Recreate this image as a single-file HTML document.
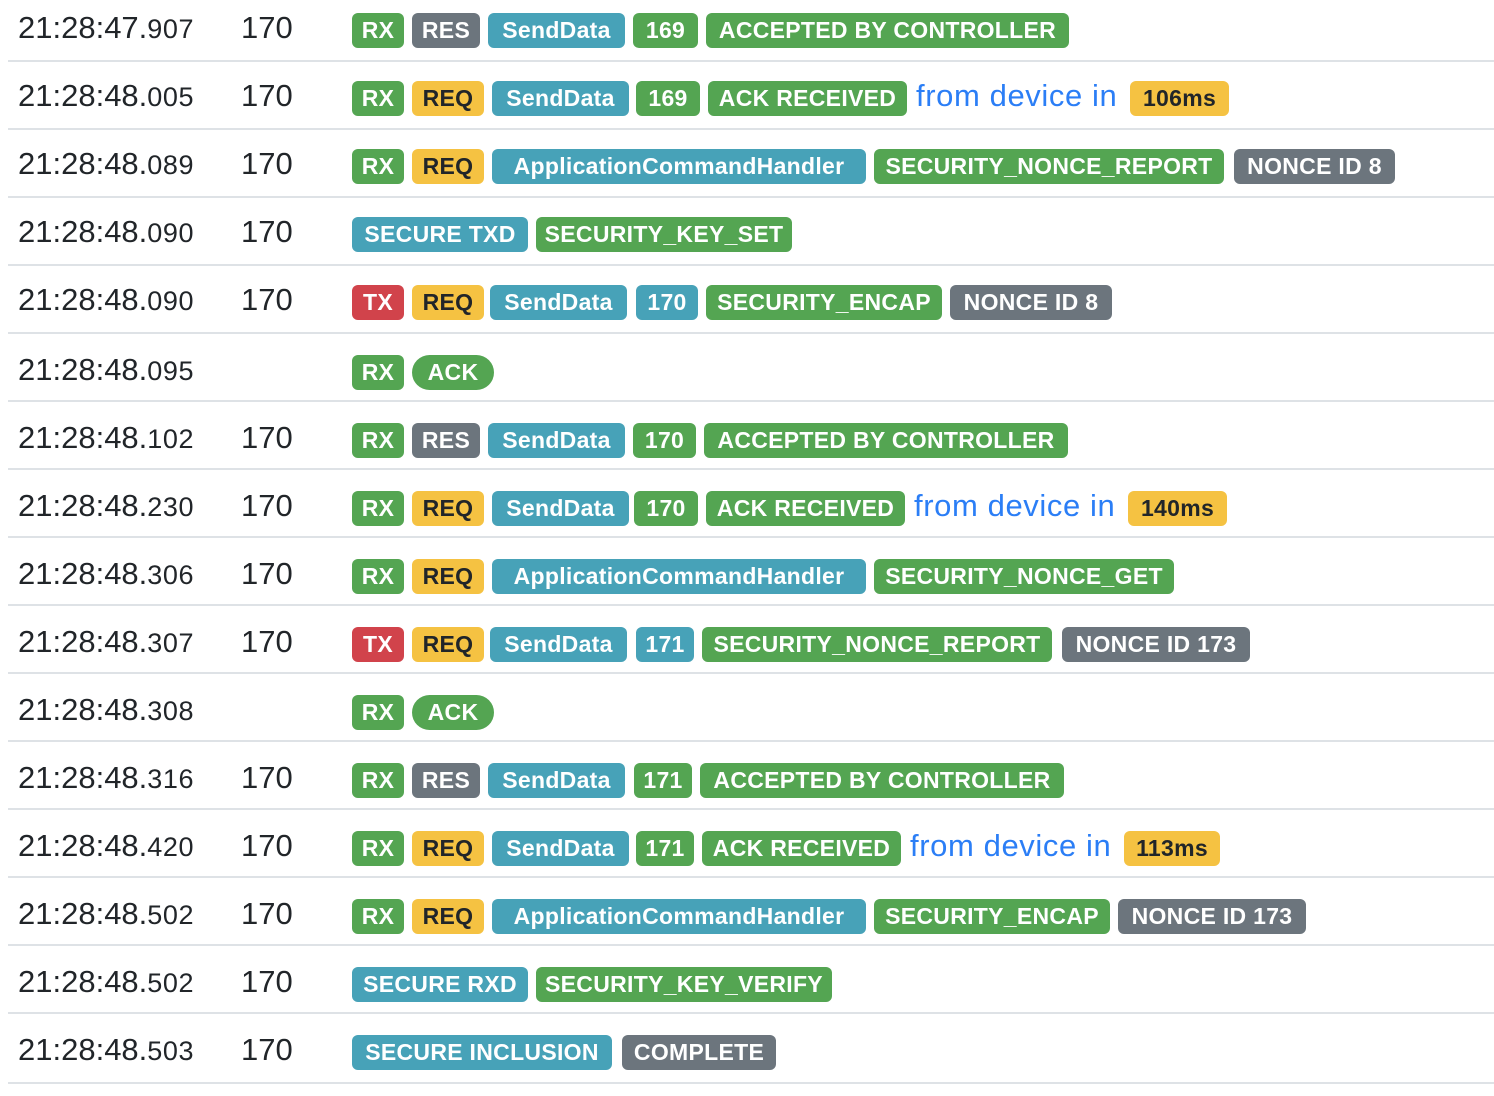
<!DOCTYPE html>
<html><head><meta charset="utf-8"><style>
body{margin:0;width:1494px;height:1096px;background:#fff;position:relative;overflow:hidden;font-family:"Liberation Sans",Arial,sans-serif;color:#212529}
.s{position:absolute;left:8px;right:0;height:2px;background:#dee2e6}
.t{position:absolute;left:18px;height:40px;line-height:40px;font-size:31px;white-space:nowrap}
.t small{font-size:27px;letter-spacing:0.6px}
.n{position:absolute;left:241px;height:40px;line-height:40px;font-size:31px}
.b{position:absolute;height:35px;line-height:35px;font-size:23px;font-weight:bold;color:#fff;text-align:center;border-radius:6px;white-space:nowrap;overflow:hidden;letter-spacing:0.3px}
.g{background:#54a552}.y{background:#f5c242;color:#212529}.c{background:#47a2b8}.k{background:#6c757d}.r{background:#d1434b}
.p{border-radius:18px}
.f{position:absolute;height:40px;line-height:40px;font-size:31px;color:#2b7ef6;white-space:nowrap;letter-spacing:0.6px}
</style></head><body>
<div class="s" style="top:60px"></div><div class="s" style="top:128px"></div><div class="s" style="top:196px"></div><div class="s" style="top:264px"></div><div class="s" style="top:332px"></div><div class="s" style="top:400px"></div><div class="s" style="top:468px"></div><div class="s" style="top:536px"></div><div class="s" style="top:604px"></div><div class="s" style="top:672px"></div><div class="s" style="top:740px"></div><div class="s" style="top:808px"></div><div class="s" style="top:876px"></div><div class="s" style="top:944px"></div><div class="s" style="top:1012px"></div><div class="s" style="top:1082px"></div>

<div class="t" style="top:8px">21:28:47.<small>907</small></div><div class="n" style="top:8px">170</div>
<div class="b g" style="top:13px;left:352px;width:52px">RX</div><div class="b k" style="top:13px;left:412px;width:68px">RES</div><div class="b c" style="top:13px;left:488px;width:137px">SendData</div><div class="b g" style="top:13px;left:633px;width:65px">169</div><div class="b g" style="top:13px;left:706px;width:363px">ACCEPTED BY CONTROLLER</div>

<div class="t" style="top:76px">21:28:48.<small>005</small></div><div class="n" style="top:76px">170</div>
<div class="b g" style="top:81px;left:352px;width:52px">RX</div><div class="b y" style="top:81px;left:412px;width:72px">REQ</div><div class="b c" style="top:81px;left:492px;width:137px">SendData</div><div class="b g" style="top:81px;left:636px;width:64px">169</div><div class="b g" style="top:81px;left:708px;width:199px">ACK RECEIVED</div><div class="f" style="top:76px;left:916px">from device in</div><div class="b y" style="top:81px;left:1130px;width:99px">106ms</div>

<div class="t" style="top:144px">21:28:48.<small>089</small></div><div class="n" style="top:144px">170</div>
<div class="b g" style="top:149px;left:352px;width:52px">RX</div><div class="b y" style="top:149px;left:412px;width:72px">REQ</div><div class="b c" style="top:149px;left:492px;width:374px">ApplicationCommandHandler</div><div class="b g" style="top:149px;left:874px;width:350px">SECURITY_NONCE_REPORT</div><div class="b k" style="top:149px;left:1234px;width:161px">NONCE ID 8</div>

<div class="t" style="top:212px">21:28:48.<small>090</small></div><div class="n" style="top:212px">170</div>
<div class="b c" style="top:217px;left:352px;width:176px">SECURE TXD</div><div class="b g" style="top:217px;left:536px;width:256px">SECURITY_KEY_SET</div>

<div class="t" style="top:280px">21:28:48.<small>090</small></div><div class="n" style="top:280px">170</div>
<div class="b r" style="top:285px;left:352px;width:52px">TX</div><div class="b y" style="top:285px;left:412px;width:72px">REQ</div><div class="b c" style="top:285px;left:490px;width:137px">SendData</div><div class="b c" style="top:285px;left:636px;width:62px">170</div><div class="b g" style="top:285px;left:706px;width:236px">SECURITY_ENCAP</div><div class="b k" style="top:285px;left:950px;width:162px">NONCE ID 8</div>

<div class="t" style="top:350px">21:28:48.<small>095</small></div>
<div class="b g" style="top:355px;left:352px;width:52px">RX</div><div class="b g p" style="top:355px;left:412px;width:82px">ACK</div>

<div class="t" style="top:418px">21:28:48.<small>102</small></div><div class="n" style="top:418px">170</div>
<div class="b g" style="top:423px;left:352px;width:52px">RX</div><div class="b k" style="top:423px;left:412px;width:68px">RES</div><div class="b c" style="top:423px;left:488px;width:137px">SendData</div><div class="b g" style="top:423px;left:633px;width:63px">170</div><div class="b g" style="top:423px;left:704px;width:364px">ACCEPTED BY CONTROLLER</div>

<div class="t" style="top:486px">21:28:48.<small>230</small></div><div class="n" style="top:486px">170</div>
<div class="b g" style="top:491px;left:352px;width:52px">RX</div><div class="b y" style="top:491px;left:412px;width:72px">REQ</div><div class="b c" style="top:491px;left:492px;width:137px">SendData</div><div class="b g" style="top:491px;left:634px;width:64px">170</div><div class="b g" style="top:491px;left:706px;width:199px">ACK RECEIVED</div><div class="f" style="top:486px;left:914px">from device in</div><div class="b y" style="top:491px;left:1128px;width:99px">140ms</div>

<div class="t" style="top:554px">21:28:48.<small>306</small></div><div class="n" style="top:554px">170</div>
<div class="b g" style="top:559px;left:352px;width:52px">RX</div><div class="b y" style="top:559px;left:412px;width:72px">REQ</div><div class="b c" style="top:559px;left:492px;width:374px">ApplicationCommandHandler</div><div class="b g" style="top:559px;left:874px;width:300px">SECURITY_NONCE_GET</div>

<div class="t" style="top:622px">21:28:48.<small>307</small></div><div class="n" style="top:622px">170</div>
<div class="b r" style="top:627px;left:352px;width:52px">TX</div><div class="b y" style="top:627px;left:412px;width:72px">REQ</div><div class="b c" style="top:627px;left:490px;width:137px">SendData</div><div class="b c" style="top:627px;left:636px;width:58px">171</div><div class="b g" style="top:627px;left:702px;width:350px">SECURITY_NONCE_REPORT</div><div class="b k" style="top:627px;left:1062px;width:188px">NONCE ID 173</div>

<div class="t" style="top:690px">21:28:48.<small>308</small></div>
<div class="b g" style="top:695px;left:352px;width:52px">RX</div><div class="b g p" style="top:695px;left:412px;width:82px">ACK</div>

<div class="t" style="top:758px">21:28:48.<small>316</small></div><div class="n" style="top:758px">170</div>
<div class="b g" style="top:763px;left:352px;width:52px">RX</div><div class="b k" style="top:763px;left:412px;width:68px">RES</div><div class="b c" style="top:763px;left:488px;width:137px">SendData</div><div class="b g" style="top:763px;left:634px;width:58px">171</div><div class="b g" style="top:763px;left:700px;width:364px">ACCEPTED BY CONTROLLER</div>

<div class="t" style="top:826px">21:28:48.<small>420</small></div><div class="n" style="top:826px">170</div>
<div class="b g" style="top:831px;left:352px;width:52px">RX</div><div class="b y" style="top:831px;left:412px;width:72px">REQ</div><div class="b c" style="top:831px;left:492px;width:137px">SendData</div><div class="b g" style="top:831px;left:636px;width:58px">171</div><div class="b g" style="top:831px;left:702px;width:199px">ACK RECEIVED</div><div class="f" style="top:826px;left:910px">from device in</div><div class="b y" style="top:831px;left:1124px;width:96px">113ms</div>

<div class="t" style="top:894px">21:28:48.<small>502</small></div><div class="n" style="top:894px">170</div>
<div class="b g" style="top:899px;left:352px;width:52px">RX</div><div class="b y" style="top:899px;left:412px;width:72px">REQ</div><div class="b c" style="top:899px;left:492px;width:374px">ApplicationCommandHandler</div><div class="b g" style="top:899px;left:874px;width:236px">SECURITY_ENCAP</div><div class="b k" style="top:899px;left:1118px;width:188px">NONCE ID 173</div>

<div class="t" style="top:962px">21:28:48.<small>502</small></div><div class="n" style="top:962px">170</div>
<div class="b c" style="top:967px;left:352px;width:176px">SECURE RXD</div><div class="b g" style="top:967px;left:536px;width:296px">SECURITY_KEY_VERIFY</div>

<div class="t" style="top:1030px">21:28:48.<small>503</small></div><div class="n" style="top:1030px">170</div>
<div class="b c" style="top:1035px;left:352px;width:260px">SECURE INCLUSION</div><div class="b k" style="top:1035px;left:622px;width:154px">COMPLETE</div>
</body></html>
